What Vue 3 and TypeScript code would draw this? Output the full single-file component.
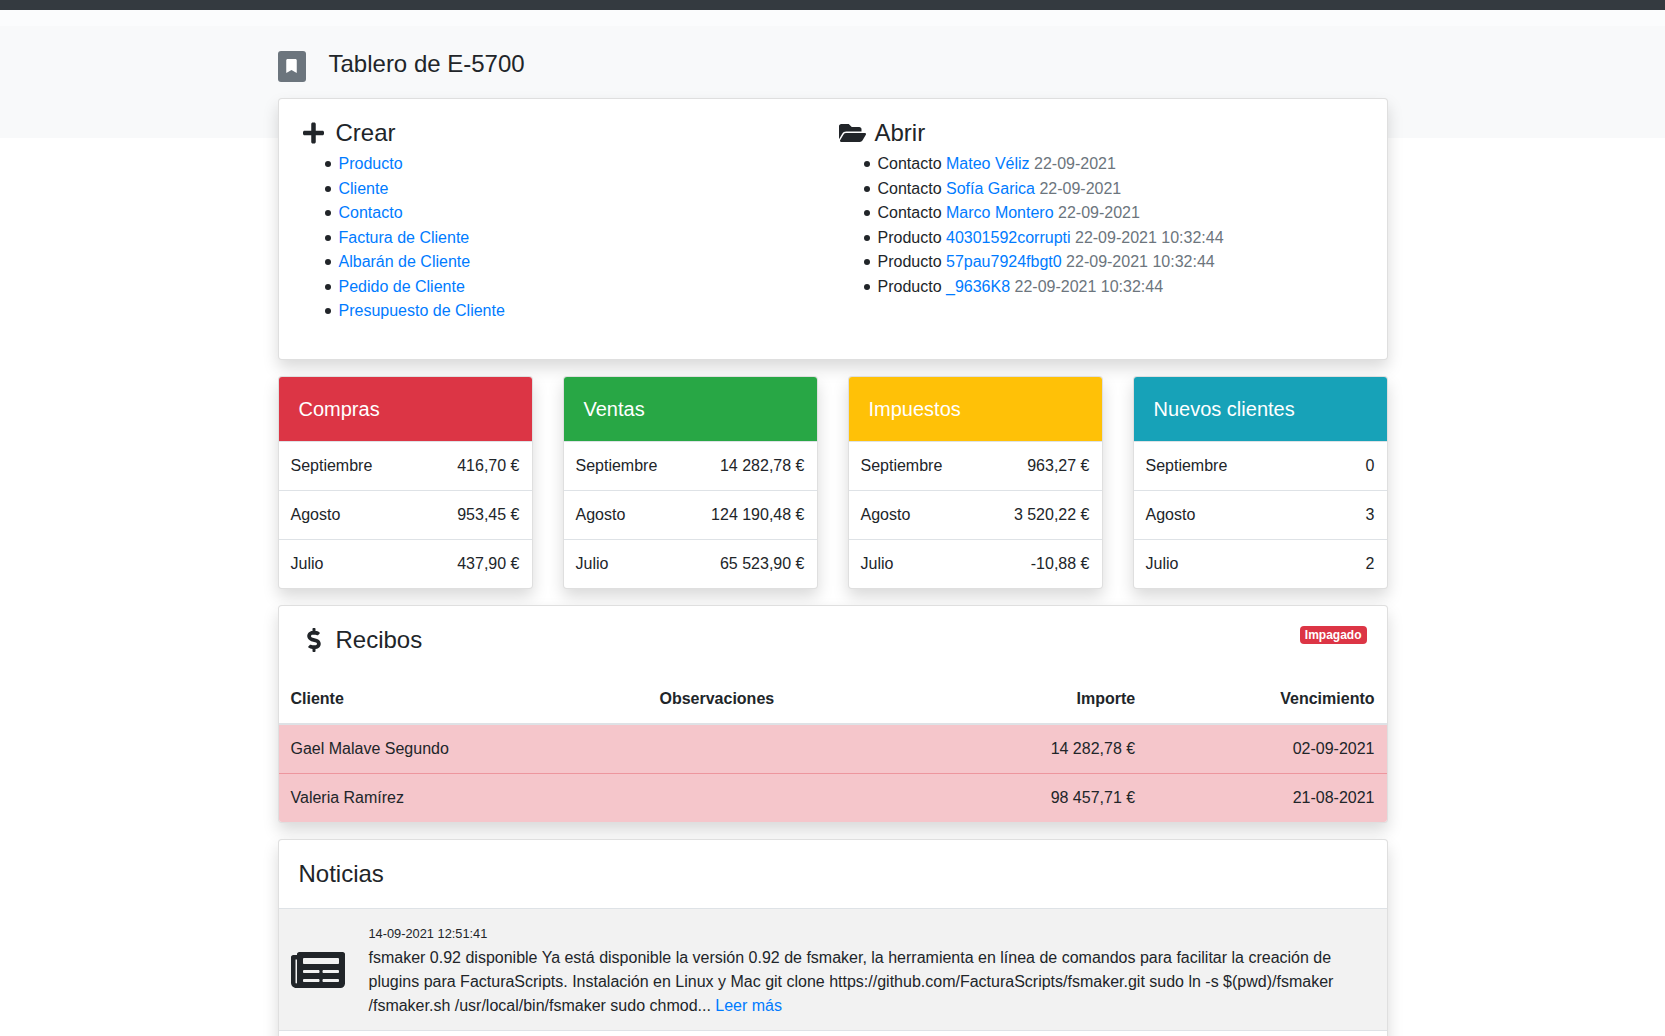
<script setup lang="ts">
interface RecentItem {
  kind: string
  name: string
  date: string
}

interface StatCard {
  title: string
  tone: string
  rows: [string, string][]
}

interface Receipt {
  customer: string
  notes: string
  amount: string
  due: string
}

const createLinks: string[] = [
  'Producto',
  'Cliente',
  'Contacto',
  'Factura de Cliente',
  'Albarán de Cliente',
  'Pedido de Cliente',
  'Presupuesto de Cliente',
]

const recent: RecentItem[] = [
  { kind: 'Contacto', name: 'Mateo Véliz', date: '22-09-2021' },
  { kind: 'Contacto', name: 'Sofía Garica', date: '22-09-2021' },
  { kind: 'Contacto', name: 'Marco Montero', date: '22-09-2021' },
  { kind: 'Producto', name: '40301592corrupti', date: '22-09-2021 10:32:44' },
  { kind: 'Producto', name: '57pau7924fbgt0', date: '22-09-2021 10:32:44' },
  { kind: 'Producto', name: '_9636K8', date: '22-09-2021 10:32:44' },
]

const stats: StatCard[] = [
  { title: 'Compras', tone: 'danger', rows: [['Septiembre', '416,70 €'], ['Agosto', '953,45 €'], ['Julio', '437,90 €']] },
  { title: 'Ventas', tone: 'success', rows: [['Septiembre', '14 282,78 €'], ['Agosto', '124 190,48 €'], ['Julio', '65 523,90 €']] },
  { title: 'Impuestos', tone: 'warning', rows: [['Septiembre', '963,27 €'], ['Agosto', '3 520,22 €'], ['Julio', '-10,88 €']] },
  { title: 'Nuevos clientes', tone: 'info', rows: [['Septiembre', '0'], ['Agosto', '3'], ['Julio', '2']] },
]

const receipts: Receipt[] = [
  { customer: 'Gael Malave Segundo', notes: '', amount: '14 282,78 €', due: '02-09-2021' },
  { customer: 'Valeria Ramírez', notes: '', amount: '98 457,71 €', due: '21-08-2021' },
]
</script>

<template>
  <div class="page">
    <nav class="navbar" aria-label="Menú principal"></nav>
    <div class="navbar-gap"></div>
    <header class="banner">
      <div class="container heading">
        <button class="bookmark" type="button" aria-label="Marcar página">
          <svg width="11" height="14" viewBox="0 0 384 512" fill="currentColor" aria-hidden="true">
            <path d="M0 512V48C0 21.490 21.490 0 48 0h288c26.510 0 48 21.490 48 48v464L192 400 0 512z" />
          </svg>
        </button>
        <h1>Tablero de E-5700</h1>
      </div>
    </header>

    <main class="container content">
      <section class="card shortcuts">
        <div>
          <h2 class="with-icon">
            <span class="icon">
              <svg width="21" height="24" viewBox="0 0 448 512" fill="currentColor" aria-hidden="true">
                <path d="M416 208H272V64c0-17.670-14.330-32-32-32h-32c-17.670 0-32 14.330-32 32v144H32c-17.670 0-32 14.330-32 32v32c0 17.670 14.330 32 32 32h144v144c0 17.670 14.330 32 32 32h32c17.670 0 32-14.330 32-32V304h144c17.670 0 32-14.330 32-32v-32c0-17.670-14.330-32-32-32z" />
              </svg>
            </span>
            Crear
          </h2>
          <ul>
            <li v-for="link in createLinks" :key="link"><a href="#">{{ link }}</a></li>
          </ul>
        </div>
        <div>
          <h2 class="with-icon">
            <span class="icon">
              <svg width="27" height="24" viewBox="0 0 576 512" fill="currentColor" aria-hidden="true">
                <path d="M572.694 292.093L500.270 416.248A63.997 63.997 0 0 1 444.989 448H45.025c-18.523 0-30.064-20.093-20.731-36.093l72.424-124.155A64 64 0 0 1 152 256h399.964c18.523 0 30.064 20.093 20.730 36.093zM152 224h328v-48c0-26.510-21.490-48-48-48H272l-64-64H48C21.490 64 0 85.490 0 112v278.046l69.077-118.418C86.214 242.250 117.989 224 152 224z" />
              </svg>
            </span>
            Abrir
          </h2>
          <ul>
            <li v-for="item in recent" :key="item.name">
              {{ item.kind }} <a href="#">{{ item.name }}</a> <span class="muted">{{ item.date }}</span>
            </li>
          </ul>
        </div>
      </section>

      <div class="stats">
        <section v-for="stat in stats" :key="stat.title" class="card">
          <h2 class="stat-title" :class="stat.tone">{{ stat.title }}</h2>
          <table :aria-label="stat.title">
            <tbody>
              <tr v-for="row in stat.rows" :key="row[0]">
                <td>{{ row[0] }}</td>
                <td class="end">{{ row[1] }}</td>
              </tr>
            </tbody>
          </table>
        </section>
      </div>

      <section class="card">
        <div class="card-head">
          <h2 class="with-icon">
            <span class="icon">
              <svg width="14" height="24" viewBox="0 0 288 512" fill="currentColor" aria-hidden="true">
                <path d="M209.200 233.400l-108-31.600C88.700 198.200 80 186.500 80 173.500c0-16.300 13.200-29.500 29.500-29.500h66.300c12.200 0 24.200 3.700 34.200 10.500 6.100 4.100 14.300 3.100 19.500-2l34.800-34c7.100-6.900 6.100-18.400-1.800-24.500C238 74.800 207.400 64.100 176 64V16c0-8.800-7.200-16-16-16h-32c-8.800 0-16 7.200-16 16v48h-2.500C45.800 64-5.400 118.700.5 183.600c4.200 46.100 39.400 83.600 83.800 96.600l102.500 30c12.500 3.700 21.200 15.300 21.200 28.300 0 16.300-13.200 29.500-29.500 29.500h-66.300C100 368 88 364.300 78 357.500c-6.100-4.100-14.300-3.100-19.500 2l-34.800 34c-7.100 6.900-6.100 18.400 1.800 24.500 24.500 19.200 55.100 29.900 86.500 30v48c0 8.800 7.200 16 16 16h32c8.800 0 16-7.200 16-16v-48.200c46.600-.9 90.300-28.600 105.700-72.700 21.500-61.600-14.600-124.800-72.500-141.700z" />
              </svg>
            </span>
            Recibos
          </h2>
          <span class="badge">Impagado</span>
        </div>
        <table class="receipts" aria-label="Recibos">
          <thead>
            <tr>
              <th scope="col" class="col-customer">Cliente</th>
              <th scope="col" class="col-notes">Observaciones</th>
              <th scope="col" class="col-amount end">Importe</th>
              <th scope="col" class="end">Vencimiento</th>
            </tr>
          </thead>
          <tbody>
            <tr v-for="r in receipts" :key="r.customer">
              <td>{{ r.customer }}</td>
              <td>{{ r.notes }}</td>
              <td class="end">{{ r.amount }}</td>
              <td class="end">{{ r.due }}</td>
            </tr>
          </tbody>
        </table>
      </section>

      <section class="card news">
        <div class="card-head">
          <h2>Noticias</h2>
        </div>
        <article class="news-item">
          <svg width="54" height="48" viewBox="0 0 576 512" fill="currentColor" aria-hidden="true">
            <path d="M552 64H88c-13.255 0-24 10.745-24 24v8H24c-13.255 0-24 10.745-24 24v272c0 30.928 25.072 56 56 56h472c26.510 0 48-21.490 48-48V88c0-13.255-10.745-24-24-24zM56 400a8 8 0 0 1-8-8V144h16v248a8 8 0 0 1-8 8zm236-16H140c-6.627 0-12-5.373-12-12v-8c0-6.627 5.373-12 12-12h152c6.627 0 12 5.373 12 12v8c0 6.627-5.373 12-12 12zm208 0H348c-6.627 0-12-5.373-12-12v-8c0-6.627 5.373-12 12-12h152c6.627 0 12 5.373 12 12v8c0 6.627-5.373 12-12 12zm-208-96H140c-6.627 0-12-5.373-12-12v-8c0-6.627 5.373-12 12-12h152c6.627 0 12 5.373 12 12v8c0 6.627-5.373 12-12 12zm208 0H348c-6.627 0-12-5.373-12-12v-8c0-6.627 5.373-12 12-12h152c6.627 0 12 5.373 12 12v8c0 6.627-5.373 12-12 12zm0-96H140c-6.627 0-12-5.373-12-12v-40c0-6.627 5.373-12 12-12h360c6.627 0 12 5.373 12 12v40c0 6.627-5.373 12-12 12z" />
          </svg>
          <p>
            <time datetime="2021-09-14T12:51:41">14-09-2021 12:51:41</time><br />
            fsmaker 0.92 disponible Ya está disponible la versión 0.92 de fsmaker, la herramienta en línea de comandos para facilitar la creación de plugins para FacturaScripts. Instalación en Linux y Mac git clone https://github.com/FacturaScripts/fsmaker.git sudo ln -s $(pwd)/fsmaker<wbr />/fsmaker.sh /usr/local/bin/fsmaker sudo chmod... <a href="#">Leer más</a>
          </p>
        </article>
        <article class="news-item"></article>
      </section>
    </main>
  </div>
</template>

<style>
html,
body {
  margin: 0;
  background: #fff;
}

body {
  overflow: hidden;
}
</style>

<style scoped>
.page {
  height: 100vh;
  overflow: hidden;
  color: #212529;
  font-family: "Liberation Sans", Arial, sans-serif;
  font-size: 16px;
  line-height: 24px;
}

.page *,
.page *::before,
.page *::after {
  box-sizing: border-box;
}

.container {
  width: 100%;
  max-width: 1140px;
  margin: 0 auto;
  padding: 0 15px;
}

.navbar {
  height: 10px;
  background: #343a40;
}

.navbar-gap {
  height: 16px;
  background: #fbfcfd;
}

.banner {
  height: 112px;
  padding-top: 24px;
  background: #f8f9fa;
}

.heading {
  display: flex;
  align-items: flex-start;
  gap: 23px;
}

.bookmark {
  display: flex;
  align-items: center;
  justify-content: center;
  width: 28px;
  height: 31px;
  margin-top: 1px;
  padding: 0 0 2px;
  border: 0;
  border-radius: 3px;
  background: #6c757d;
  color: #fff;
}

h1,
h2 {
  margin: 0;
  font-size: 24px;
  font-weight: 400;
  line-height: 28px;
}

.content {
  display: flex;
  flex-direction: column;
  gap: 16px;
  margin-top: -40px;
}

.card {
  border: 1px solid rgba(0, 0, 0, 0.125);
  border-radius: 4px;
  background: #fff;
  box-shadow: 0 8px 16px rgba(0, 0, 0, 0.15);
}

.shortcuts {
  display: grid;
  grid-template-columns: 1fr 1fr;
  gap: 10px;
  padding: 20px;
}

.with-icon {
  display: flex;
  align-items: center;
  gap: 7px;
}

.icon {
  display: flex;
  justify-content: center;
  width: 30px;
}

ul {
  margin: 5px 0 16px;
  padding-left: 40px;
  list-style: none;
}

li::before {
  content: "";
  display: inline-block;
  width: 6px;
  height: 6px;
  margin: 0 8px 0 -14px;
  border-radius: 50%;
  background: currentColor;
  vertical-align: 2px;
}

li:nth-child(odd) {
  margin-bottom: 1px;
}

a {
  color: #007bff;
  text-decoration: none;
}

.muted {
  color: #6c757d;
}

.stats {
  display: grid;
  grid-template-columns: repeat(4, 1fr);
  gap: 30px;
}

.stat-title {
  padding: 20px;
  border-radius: 3px 3px 0 0;
  color: #fff;
  font-size: 20px;
  line-height: 24px;
}

.danger {
  background: #dc3545;
}

.success {
  background: #28a745;
}

.warning {
  background: #ffc107;
}

.info {
  background: #17a2b8;
}

table {
  width: 100%;
  border-collapse: separate;
  border-spacing: 0;
}

td {
  padding: 12px;
  border-top: 1px solid #dee2e6;
}

th {
  padding: 12px;
  border-bottom: 2px solid #dee2e6;
  text-align: left;
}

.end {
  text-align: right;
}

.card-head {
  display: flex;
  align-items: flex-start;
  justify-content: space-between;
  padding: 20px 20px 21px;
}

.badge {
  padding: 3px 5px;
  border-radius: 4px;
  background: #dc3545;
  color: #fff;
  font-size: 12px;
  font-weight: 700;
  line-height: 12px;
}

.receipts {
  table-layout: fixed;
}

.col-customer {
  width: 33.3%;
}

.col-notes {
  width: 25%;
}

.col-amount {
  width: 20.1%;
}

.receipts td {
  border-color: #ed969e;
  background: #f5c6cb;
}

.receipts tbody tr:first-child td {
  border-top: 0;
}

.receipts tr:last-child td:first-child {
  border-bottom-left-radius: 3px;
}

.receipts tr:last-child td:last-child {
  border-bottom-right-radius: 3px;
}

.news .card-head {
  padding-bottom: 20px;
}

.news-item {
  display: flex;
  align-items: center;
  gap: 24px;
  min-height: 121px;
  padding: 12px;
  border-top: 1px solid #dee2e6;
}

.news-item:nth-child(even) {
  background: #f2f2f2;
}

.news-item svg {
  flex: none;
}

time {
  font-size: 80%;
}

p {
  margin: 0;
}
</style>
